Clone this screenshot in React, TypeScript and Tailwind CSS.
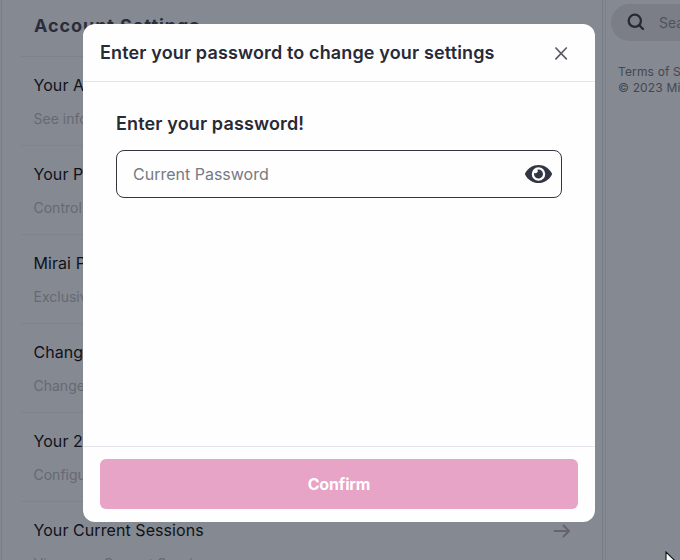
import React from 'react';
import { FaEye } from 'react-icons/fa';

type Setting = { title: string; detail: string };

const settings: Setting[] = [
  { title: 'Your Account', detail: 'See information about your account' },
  { title: 'Your Profile', detail: 'Control your profile' },
  { title: 'Mirai Plus', detail: 'Exclusive features' },
  { title: 'Change Password', detail: 'Change your password' },
  { title: 'Your 2FA', detail: 'Configure your 2FA' },
  { title: 'Your Current Sessions', detail: 'View your Current Sessions' },
];

function ArrowIcon() {
  return (
    <svg width="18" height="16" viewBox="0 0 18 16" fill="none" stroke="#67636c" strokeWidth="2" strokeLinecap="round" strokeLinejoin="round">
      <path d="M1.5 8H16M10.5 2.5 16 8l-5.5 5.5" />
    </svg>
  );
}

function SettingRow({ title, detail }: Setting) {
  return (
    <div className="flex h-[89px] shrink-0 items-start justify-between border-t border-[#7f838c] pl-[13.5px] pr-[17px] pt-4">
      <div>
        <div className="text-[16px] leading-6 tracking-[0.07px] text-[#10121a]">{title}</div>
        <div className="mt-3 text-[14px] leading-5 text-[#666973]">{detail}</div>
      </div>
      <div className="mt-[5px]">
        <ArrowIcon />
      </div>
    </div>
  );
}

function PasswordModal() {
  return (
    <section className="absolute left-[83px] top-6 flex h-[498px] w-[512px] flex-col rounded-[12px] bg-[#fefeff]">
      <header className="flex h-[58px] shrink-0 items-center justify-between border-b border-[#e4e5ea] pl-[17px] pr-[27px]">
        <h2 className="text-[18px] font-semibold leading-7 tracking-[0.14px] text-[#282a36]">Enter your password to change your settings</h2>
        <svg width="14" height="14" viewBox="0 0 14 14" fill="none" stroke="#5a5d66" strokeWidth="1.7" strokeLinecap="round">
          <path d="M1.9 2 12.3 12.8M12.3 2 1.9 12.8" />
        </svg>
      </header>
      <div className="flex-1 px-[33px] pt-7">
        <h3 className="text-[18px] font-semibold leading-7 tracking-[0.14px] text-[#282a36]">Enter your password!</h3>
        <div className="mt-3 flex h-12 items-center justify-between rounded-[8px] border border-[#34363f] pl-4 pr-[9px]">
          <span className="text-[16px] leading-6 text-[#777983]">Current Password</span>
          <FaEye className="h-6 w-[27px] text-[#323644]" />
        </div>
      </div>
      <footer className="h-[76px] shrink-0 border-t border-[#e4e5ea] px-[17px] pt-3">
        <button className="h-[50px] w-full rounded-[6px] bg-[#e8a4c6] text-[16px] font-bold tracking-[-0.15px] text-white">Confirm</button>
      </footer>
    </section>
  );
}

export default function App() {
  return (
    <div className="relative h-[560px] w-[680px] overflow-hidden bg-[#858992] font-[Inter,'Liberation_Sans',sans-serif]">
      <div className="flex h-full">
        <main className="ml-px flex w-[602px] shrink-0 flex-col border-l border-r border-[#787c85] pl-[18px] pr-[14px]">
          <h1 className="h-14 shrink-0 pl-[14px] pt-3 text-[18px] font-bold leading-7 tracking-[0.95px] text-[#2b2e3a]">Account Settings</h1>
          {settings.map((item) => (
            <SettingRow key={item.title} {...item} />
          ))}
        </main>
        <aside className="ml-[2px] w-[260px] shrink-0 border-l border-[#7c8089] pl-[5px] pt-1">
          <div className="flex h-[37px] items-center rounded-full bg-[#7b7e87] pl-4">
            <svg className="-mt-[2px]" width="18" height="18" viewBox="0 0 18 18" fill="none" stroke="#262936" strokeWidth="2.3" strokeLinecap="round">
              <circle cx="7.8" cy="7.8" r="6.1" />
              <path d="m12.3 12.3 3.7 3.7" />
            </svg>
            <span className="ml-[14px] text-[14px] text-[#50535d]">Search</span>
          </div>
          <div className="whitespace-nowrap pl-[7px] pt-[23px] text-[12px] leading-4 tracking-[0.15px] text-[#444751]">
            <p>Terms of Service</p>
            <p>© 2023 Mirai</p>
          </div>
        </aside>
      </div>
      <PasswordModal />
      <svg className="absolute left-[665px] top-[551px]" width="14" height="20" viewBox="0 0 14 20">
        <path d="M1 1v15l3.5-3.3 2.4 5.5 2.4-1-2.4-5.5H12Z" fill="#fff" stroke="#10121a" strokeWidth="1.1" />
      </svg>
    </div>
  );
}
